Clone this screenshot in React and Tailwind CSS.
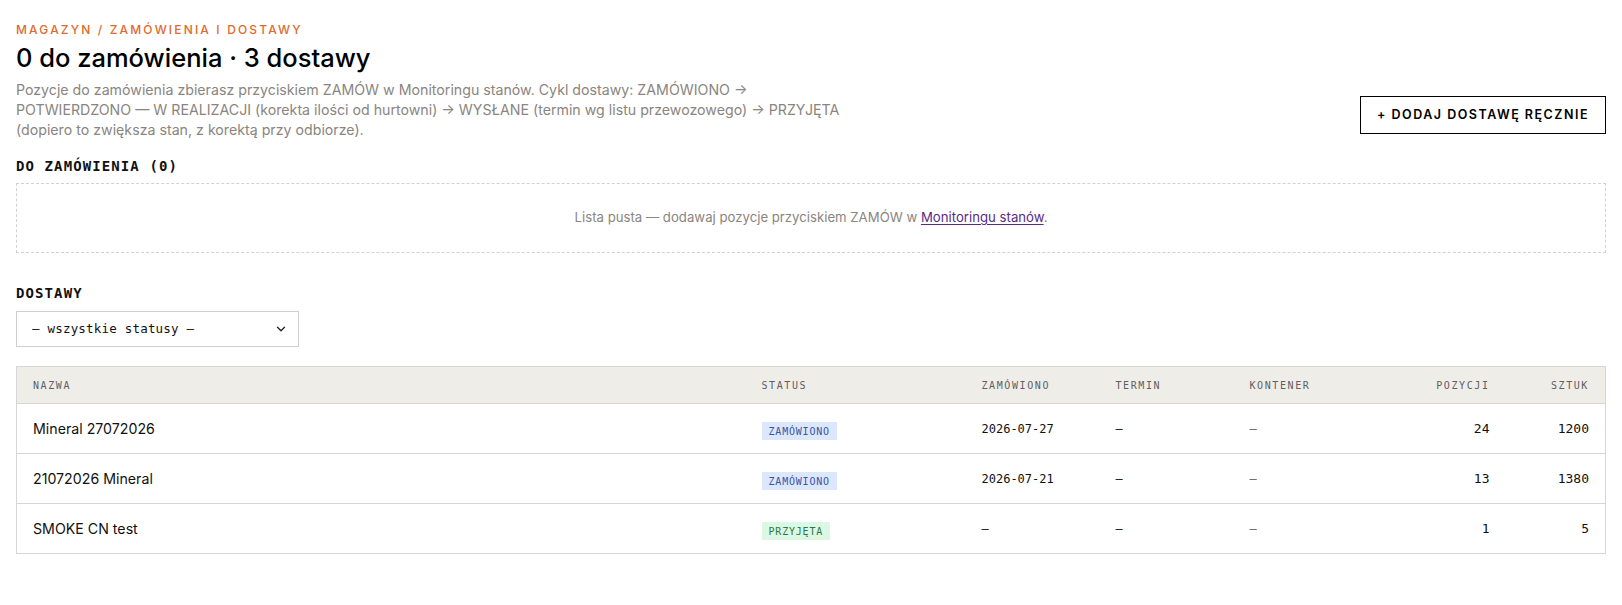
import React, { useState } from "react";
import { ChevronDown } from "lucide-react";

const mono = "font-['DejaVu_Sans_Mono',monospace]";

const deliveries = [
    { name: "Mineral 27072026", status: "ZAMÓWIONO", ordered: "2026-07-27", due: "—", container: "—", items: 24, units: 1200 },
    { name: "21072026 Mineral", status: "ZAMÓWIONO", ordered: "2026-07-21", due: "—", container: "—", items: 13, units: 1380 },
    { name: "SMOKE CN test", status: "PRZYJĘTA", ordered: "—", due: "—", container: "—", items: 1, units: 5 },
];

function StatusBadge({ status }) {
    const tone =
        status === "PRZYJĘTA"
            ? "bg-[#dcf7e3] text-[#2b7a44]"
            : "bg-[#dbe7fb] text-[#3a53a4]";
    return (
        <span className={`inline-flex h-[18px] items-center px-[7px] text-[10px] tracking-[0.8px] ${mono} ${tone}`}>
            {status}
        </span>
    );
}

export default function App() {
    const [filter, setFilter] = useState("");

    const rows = filter ? deliveries.filter((d) => d.status === filter) : deliveries;

    return (
        <div className="min-h-screen bg-white px-4 pt-[22px] pb-10 font-['Inter','Noto_Sans',sans-serif] text-[#111]">
            {/* Page header */}
            <div className="flex items-end justify-between">
                <div>
                    <div className="text-[12px] leading-4 font-medium tracking-[0.18em] text-[#e06a2c]">
                        MAGAZYN / ZAMÓWIENIA I DOSTAWY
                    </div>
                    <h1 className="mt-1 text-[25.5px] leading-8 font-medium text-black">
                        0 do zamówienia · 3 dostawy
                    </h1>
                    <p className="mt-[6px] max-w-[835px] text-[14.2px] leading-5 text-[#8a8580]">
                        Pozycje do zamówienia zbierasz przyciskiem ZAMÓW w Monitoringu stanów. Cykl dostawy: ZAMÓWIONO →
                        POTWIERDZONO — W REALIZACJI (korekta ilości od hurtowni) → WYSŁANE (termin wg listu przewozowego) → PRZYJĘTA
                        (dopiero to zwiększa stan, z korektą przy odbiorze).
                    </p>
                </div>
                <button className="mb-[6px] h-[38px] w-[246px] border-[1.5px] border-black bg-white text-[12.5px] font-semibold tracking-[1.5px] text-black">
                    + DODAJ DOSTAWĘ RĘCZNIE
                </button>
            </div>

            {/* Do zamówienia */}
            <h2 className={`mt-[17px] text-[14px] leading-[18px] font-bold tracking-[1.1px] ${mono}`}>DO ZAMÓWIENIA (0)</h2>
            <div className="mt-[8px] flex h-[70px] items-center justify-center border border-dashed border-[#d2d2d2] text-[13.2px] text-[#8a8580]">
                <span>
                    Lista pusta — dodawaj pozycje przyciskiem ZAMÓW w{" "}
                    <a href="#" className="text-[#5a2a86] underline underline-offset-2">Monitoringu stanów</a>.
                </span>
            </div>

            {/* Dostawy */}
            <h2 className={`mt-[31px] text-[14px] leading-[18px] font-bold tracking-[1.1px] ${mono}`}>DOSTAWY</h2>
            <div className="relative mt-[9px] w-[283px]">
                <select
                    value={filter}
                    onChange={(e) => setFilter(e.target.value)}
                    className={`h-9 w-full appearance-none border border-[#cfcfcf] bg-white pl-[15px] pr-8 text-[12.5px] tracking-[0.2px] text-[#111] outline-none ${mono}`}
                >
                    <option value="">— wszystkie statusy —</option>
                    <option value="ZAMÓWIONO">ZAMÓWIONO</option>
                    <option value="PRZYJĘTA">PRZYJĘTA</option>
                </select>
                <ChevronDown className="pointer-events-none absolute right-[11px] top-[11px] h-[14px] w-[14px] text-[#222]" strokeWidth={2.2} />
            </div>

            <table className="mt-[19px] w-full table-fixed border-collapse border border-[#d6d6d6]">
                <colgroup>
                    <col className="w-[729px]" />
                    <col className="w-[220px]" />
                    <col className="w-[134px]" />
                    <col className="w-[134px]" />
                    <col className="w-[134px]" />
                    <col />
                    <col className="w-[100px]" />
                </colgroup>
                <thead>
                    <tr className={`h-[37px] bg-[#efede8] text-left text-[10px] tracking-[1.6px] text-[#5f5f5f] ${mono}`}>
                        <th className="px-4 font-normal">NAZWA</th>
                        <th className="px-4 font-normal">STATUS</th>
                        <th className="px-4 font-normal">ZAMÓWIONO</th>
                        <th className="px-4 font-normal">TERMIN</th>
                        <th className="px-4 font-normal">KONTENER</th>
                        <th className="px-4 text-right font-normal">POZYCJI</th>
                        <th className="px-4 text-right font-normal">SZTUK</th>
                    </tr>
                </thead>
                <tbody>
                    {rows.map((d) => (
                        <tr key={d.name} className="h-[50px] border-t border-[#d6d6d6]">
                            <td className="px-4 text-[14.2px] text-[#111]">{d.name}</td>
                            <td className="px-4"><StatusBadge status={d.status} /></td>
                            <td className={`px-4 text-[12px] text-[#111] ${mono}`}>{d.ordered}</td>
                            <td className={`px-4 text-[12px] text-[#111] ${mono}`}>{d.due}</td>
                            <td className={`px-4 text-[12px] text-[#666] ${mono}`}>{d.container}</td>
                            <td className={`px-4 text-right text-[13px] text-[#111] ${mono}`}>{d.items}</td>
                            <td className={`px-4 text-right text-[13px] text-[#111] ${mono}`}>{d.units}</td>
                        </tr>
                    ))}
                </tbody>
            </table>
        </div>
    );
}
